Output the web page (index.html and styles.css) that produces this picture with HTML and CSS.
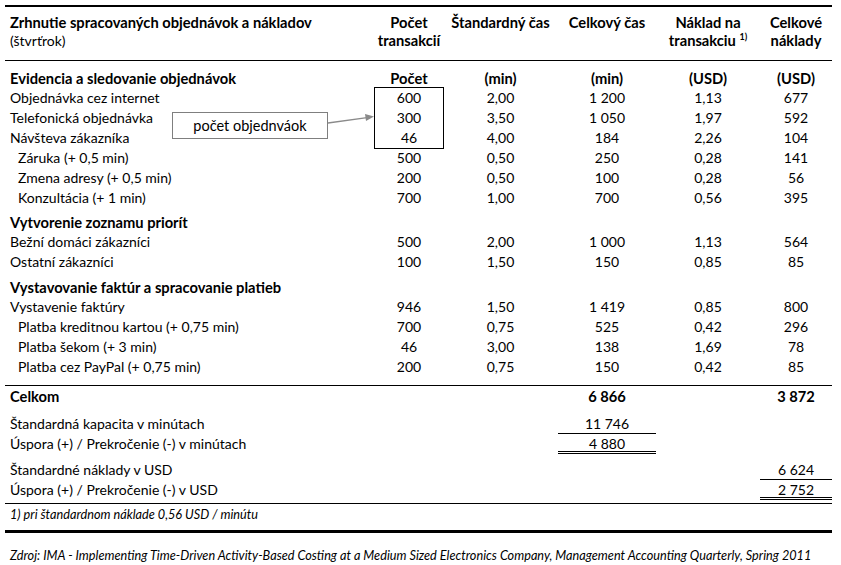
FILE: index.html
```html
<!DOCTYPE html>
<html lang="sk">
<head>
<meta charset="utf-8">
<title>Zrhnutie spracovaných objednávok a nákladov</title>
<link rel="stylesheet" href="styles.css">
</head>
<body>
<div class="page">
  <table class="report">
    <colgroup>
      <col class="c1"><col class="c2"><col class="c3"><col class="c4"><col class="c5"><col class="c6">
    </colgroup>
    <tbody>
      <tr class="head">
        <td class="lbl">Zrhnutie spracovaných objednávok a nákladov<br><span class="sub">(štvrťrok)</span></td>
        <td>Počet<br>transakcií</td>
        <td>Štandardný čas</td>
        <td>Celkový čas</td>
        <td>Náklad na<br>transakciu <sup>1)</sup></td>
        <td>Celkové<br>náklady</td>
      </tr>
      <tr class="sec first">
        <td class="lbl">Evidencia a sledovanie objednávok</td>
        <td>Počet</td><td>(min)</td><td>(min)</td><td>(USD)</td><td>(USD)</td>
      </tr>
      <tr><td class="lbl">Objednávka cez internet</td><td>600</td><td>2,00</td><td>1 200</td><td>1,13</td><td>677</td></tr>
      <tr><td class="lbl">Telefonická objednávka</td><td>300</td><td>3,50</td><td>1 050</td><td>1,97</td><td>592</td></tr>
      <tr><td class="lbl">Návšteva zákazníka</td><td>46</td><td>4,00</td><td>184</td><td>2,26</td><td>104</td></tr>
      <tr><td class="lbl ind">Záruka (+ 0,5 min)</td><td>500</td><td>0,50</td><td>250</td><td>0,28</td><td>141</td></tr>
      <tr><td class="lbl ind">Zmena adresy (+ 0,5 min)</td><td>200</td><td>0,50</td><td>100</td><td>0,28</td><td>56</td></tr>
      <tr><td class="lbl ind">Konzultácia (+ 1 min)</td><td>700</td><td>1,00</td><td>700</td><td>0,56</td><td>395</td></tr>
      <tr class="sec tight">
        <td class="lbl">Vytvorenie zoznamu priorít</td><td></td><td></td><td></td><td></td><td></td>
      </tr>
      <tr><td class="lbl">Bežní domáci zákazníci</td><td>500</td><td>2,00</td><td>1 000</td><td>1,13</td><td>564</td></tr>
      <tr><td class="lbl">Ostatní zákazníci</td><td>100</td><td>1,50</td><td>150</td><td>0,85</td><td>85</td></tr>
      <tr class="sec">
        <td class="lbl">Vystavovanie faktúr a spracovanie platieb</td><td></td><td></td><td></td><td></td><td></td>
      </tr>
      <tr><td class="lbl">Vystavenie faktúry</td><td>946</td><td>1,50</td><td>1 419</td><td>0,85</td><td>800</td></tr>
      <tr><td class="lbl ind">Platba kreditnou kartou (+ 0,75 min)</td><td>700</td><td>0,75</td><td>525</td><td>0,42</td><td>296</td></tr>
      <tr><td class="lbl ind">Platba šekom (+ 3 min)</td><td>46</td><td>3,00</td><td>138</td><td>1,69</td><td>78</td></tr>
      <tr class="pre-total"><td class="lbl ind">Platba cez PayPal (+ 0,75 min)</td><td>200</td><td>0,75</td><td>150</td><td>0,42</td><td>85</td></tr>
      <tr class="total">
        <td class="lbl">Celkom</td><td></td><td></td><td>6 866</td><td></td><td>3 872</td>
      </tr>
      <tr class="gap-a">
        <td class="lbl">Štandardná kapacita v minútach</td><td></td><td></td><td><div class="cell ul">11 746</div></td><td></td><td></td>
      </tr>
      <tr>
        <td class="lbl">Úspora (+) / Prekročenie (-) v minútach</td><td></td><td></td><td><div class="cell dbl">4 880</div></td><td></td><td></td>
      </tr>
      <tr class="gap-b">
        <td class="lbl">Štandardné náklady v USD</td><td></td><td></td><td></td><td></td><td><div class="cell ul">6 624</div></td>
      </tr>
      <tr class="last">
        <td class="lbl">Úspora (+) / Prekročenie (-) v USD</td><td></td><td></td><td></td><td></td><td><div class="cell dbl">2 752</div></td>
      </tr>
      <tr class="note">
        <td class="lbl" colspan="6">1) pri štandardnom náklade 0,56 USD / minútu</td>
      </tr>
      <tr class="source">
        <td class="lbl" colspan="6">Zdroj: IMA - Implementing Time-Driven Activity-Based Costing at a Medium Sized Electronics Company, Management Accounting Quarterly, Spring 2011</td>
      </tr>
    </tbody>
  </table>

  <div class="frame"></div>
  <svg class="arrow" width="60" height="20" viewBox="0 0 60 20" aria-hidden="true">
    <line x1="1" y1="14" x2="40" y2="8.6" stroke="#8a8a8a" stroke-width="1.3"/>
    <polygon points="47,7.6 38,5 39,12" fill="#8a8a8a"/>
  </svg>
  <div class="callout">počet objednváok</div>
</div>
</body>
</html>
```

FILE: styles.css
```css
* { box-sizing: border-box; }

html, body {
  margin: 0;
  padding: 0;
  background: #ffffff;
}

body {
  font-family: Lato, "Open Sans", sans-serif;
  font-size: 14px;
  color: #000000;
}

.page {
  position: relative;
  width: 841px;
  height: 565px;
  padding: 5px 0 0 5px;
  overflow: hidden;
}

.report {
  width: 827px;
  table-layout: fixed;
  border-collapse: separate;
  border-spacing: 0;
  border-top: 2px solid #000;
}

.c1 { width: 370px; }
.c2 { width: 68px; }
.c3 { width: 115px; }
.c4 { width: 98px; }
.c5 { width: 104px; }
.c6 { width: 72px; }

.report td {
  padding: 0;
  vertical-align: top;
  line-height: 20px;
  text-align: center;
  white-space: nowrap;
}

.report td.lbl {
  text-align: left;
  padding-left: 5px;
}

.report td.ind {
  padding-left: 13px;
}

/* header */
.head td {
  font-weight: 700;
  font-size: 14.7px;
  line-height: 18px;
  padding-top: 6px;
  padding-bottom: 10px;
  border-bottom: 1px solid #000;
}

.head .sub {
  font-weight: 400;
  font-size: 14px;
}

.head sup {
  font-size: 9px;
  line-height: 0;
  vertical-align: 6px;
}

/* section rows */
.sec td {
  font-weight: 700;
  font-size: 14.7px;
  padding-top: 5px;
}

.sec.first td {
  padding-top: 7px;
}

.sec.tight td {
  padding-top: 4px;
}

.pre-total td {
  padding-bottom: 8px;
  border-bottom: 1px solid #000;
}

.total td {
  font-weight: 700;
  font-size: 14.7px;
}

.gap-a td { padding-top: 8px; }
.gap-b td { padding-top: 6px; }

.cell {
  height: 20px;
  line-height: 20px;
}

.ul {
  border-bottom: 1px solid #000;
}

.dbl {
  border-bottom: 3px double #000;
}

.last td {
  padding-bottom: 3px;
  border-bottom: 1px solid #000;
}

.note td {
  font-style: italic;
  font-size: 12.7px;
  line-height: 16px;
  padding-top: 2px;
  padding-bottom: 8px;
  border-bottom: 3px solid #000;
}

.source td {
  font-style: italic;
  font-size: 12.7px;
  line-height: 16px;
  padding-top: 14px;
}

/* overlays (drawn shapes over the sheet) */
.frame {
  position: absolute;
  left: 374px;
  top: 87px;
  width: 70px;
  height: 62px;
  border: 1px solid #000;
}

.callout {
  position: absolute;
  left: 172px;
  top: 112px;
  width: 156px;
  height: 27px;
  border: 1px solid #7f7f7f;
  background: #fff;
  text-align: center;
  line-height: 25px;
  font-size: 14.5px;
}

.arrow {
  position: absolute;
  left: 327px;
  top: 109px;
  overflow: visible;
}
```
